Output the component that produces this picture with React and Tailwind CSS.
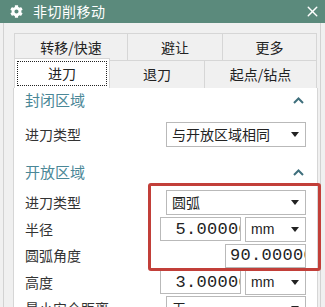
import { FaCog } from "react-icons/fa";
import { X } from "lucide-react";

const cjk = "font-['Noto_Sans_CJK_SC','Noto_Sans',sans-serif]";

function Arrow() {
  return (
    <svg width="8" height="5" viewBox="0 0 8 5" className="shrink-0">
      <path d="M0 0 H8 L4 5 Z" fill="#222" />
    </svg>
  );
}

function Chevron() {
  return (
    <svg width="11" height="7" viewBox="0 0 11 7">
      <path d="M1 6 L5.5 1.5 L10 6" fill="none" stroke="#3f6f7c" strokeWidth="2" />
    </svg>
  );
}

function Select({ value, width = "w-[140px]", mono }) {
  return (
    <div
      className={`${width} h-[25px] border border-[#b9b9b9] bg-white flex items-center pl-[5px] pr-[6px] text-[14px] text-[#222] ${
        mono ? "font-['Liberation_Sans',sans-serif]" : ""
      }`}
    >
      <span>{value}</span>
      <span className="ml-auto">
        <Arrow />
      </span>
    </div>
  );
}

function NumBox({ value }) {
  return (
    <div className="w-[81px] h-[24px] border border-[#b9b9b9] bg-white flex items-center justify-end overflow-hidden">
      <span className="font-['Liberation_Mono',monospace] text-[17px] text-[#222] whitespace-nowrap -mr-[9px] tracking-[0.3px]">
        {value}
      </span>
    </div>
  );
}

function Row({ label, children }) {
  return (
    <div className="h-[26.5px] flex items-center">
      <span className="text-[14px] text-[#333]">{label}</span>
      <div className="ml-auto flex items-center gap-[4px]">{children}</div>
    </div>
  );
}

function Header({ title }) {
  return (
    <div className="h-[24px] flex items-center pr-[2px]">
      <span className="text-[15px] text-[#4a8797]">{title}</span>
      <span className="ml-auto">
        <Chevron />
      </span>
    </div>
  );
}

export default function App() {
  return (
    <div className={`relative w-[325px] h-[307px] overflow-hidden bg-[#f0f0f0] ${cjk}`}>
      <div className="h-[23px] bg-[#5b8a7c] flex items-center pl-[10px] pr-[4px] text-white">
        <FaCog className="w-[13px] h-[13px]" />
        <span className="ml-[10px] text-[14px] tracking-[0.5px]">非切削移动</span>
        <X className="ml-auto" size={17} strokeWidth={2} />
      </div>

      <div className="h-[284px] ml-[3px] mr-[4px] border-l border-r border-[#d2d2d2] pl-[10px] pt-[10px]">
        <div className="w-[303px] flex h-[27px] border-t border-l border-[#d6d6d6] text-[14px] text-[#222]">
          <div className="w-[113px] border-r border-[#d6d6d6] flex items-center justify-center">转移/快速</div>
          <div className="w-[95px] border-r border-[#d6d6d6] flex items-center justify-center">避让</div>
          <div className="flex-1 border-r border-[#d6d6d6] flex items-center justify-center">更多</div>
        </div>
        <div className="w-[303px] flex h-[28px] border-t border-[#d6d6d6] text-[14px] text-[#222]">
          <div className="relative z-10 w-[96px] h-[30px] -mt-[3px] bg-white border-l border-t border-r border-[#d6d6d6] flex p-[2px]">
            <div className="flex-1 border border-dotted border-[#222] flex items-center justify-center">进刀</div>
          </div>
          <div className="w-[95px] border-r border-[#d6d6d6] flex items-center justify-center">退刀</div>
          <div className="flex-1 border-r border-[#d6d6d6] flex items-center justify-center">起点/钻点</div>
        </div>

        <div className="-ml-[1px] w-[305px] h-[240px] bg-white border-l border-r border-[#d6d6d6] pl-[11px] pr-[11px]">
          <Header title="封闭区域" />
          <div className="mt-[9px]">
            <Row label="进刀类型">
              <Select value="与开放区域相同" />
            </Row>
          </div>
          <div className="mt-[13px]">
            <Header title="开放区域" />
          </div>
          <div className="mt-[5px]">
            <Row label="进刀类型">
              <Select value="圆弧" />
            </Row>
            <Row label="半径">
              <NumBox value="5.00000" />
              <Select value="mm" width="w-[61px]" mono />
            </Row>
            <Row label="圆弧角度">
              <NumBox value="90.00000" />
            </Row>
            <Row label="高度">
              <NumBox value="3.00000" />
              <Select value="mm" width="w-[61px]" mono />
            </Row>
            <Row label="最小安全距离">
              <Select value="无" />
            </Row>
          </div>
        </div>
      </div>

      <div className="absolute left-[148px] top-[183px] w-[173px] h-[88px] border-[3px] border-[#c23f39] rounded-[3px]" />
    </div>
  );
}
